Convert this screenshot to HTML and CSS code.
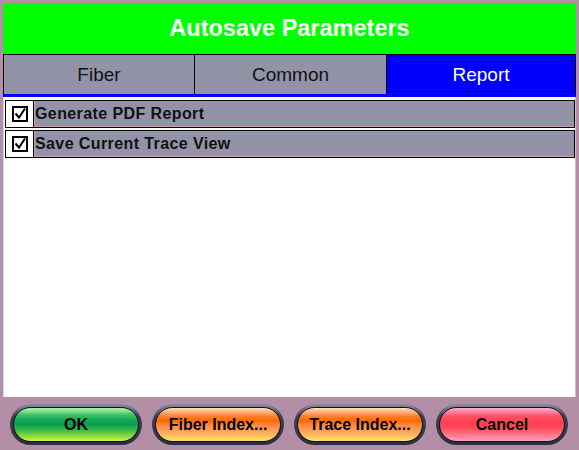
FILE: index.html
```html
<!DOCTYPE html>
<html>
<head>
<meta charset="utf-8">
<link rel="stylesheet" href="styles.css">
</head>
<body>
<div class="app">
  <div class="header">Autosave Parameters</div>
  <div class="tabs">
    <div class="tab t1">Fiber</div>
    <div class="tab t2">Common</div>
    <div class="tab active"><span class="focus">Report</span></div>
  </div>
  <div class="panel">
    <div class="row">
      <div class="cb"><svg width="16" height="16" viewBox="0 0 16 16"><rect x="1" y="1" width="14" height="14" fill="#fff" stroke="#000" stroke-width="2"/><path d="M3.5 7.5 L7 11.5 L13 2.5" fill="none" stroke="#000" stroke-width="2"/></svg></div>
      <div class="label">Generate PDF Report</div>
    </div>
    <div class="row">
      <div class="cb"><svg width="16" height="16" viewBox="0 0 16 16"><rect x="1" y="1" width="14" height="14" fill="#fff" stroke="#000" stroke-width="2"/><path d="M3.5 7.5 L7 11.5 L13 2.5" fill="none" stroke="#000" stroke-width="2"/></svg></div>
      <div class="label">Save Current Trace View</div>
    </div>
  </div>
  <div class="buttons">
    <div class="btn"><div class="face green">OK</div></div>
    <div class="btn"><div class="face orange">Fiber Index...</div></div>
    <div class="btn"><div class="face orange">Trace Index...</div></div>
    <div class="btn"><div class="face red">Cancel</div></div>
  </div>
</div>
</body>
</html>
```
FILE: styles.css
```css
html, body {
  margin: 0;
  padding: 0;
  background: #b38fa7;
  font-family: "Liberation Sans", Arial, sans-serif;
}
.app {
  width: 579px;
  height: 450px;
  padding: 3px 3px 0 3px;
  box-sizing: border-box;
  display: flex;
  flex-direction: column;
}
.header {
  height: 51px;
  background: #00ff00;
  color: #fff;
  font-weight: bold;
  font-size: 23.5px;
  display: flex;
  align-items: center;
  justify-content: center;
}
.tabs {
  display: flex;
  height: 40px;
  border: 1px solid #000;
  border-bottom: none;
  box-sizing: border-box;
}
.tab {
  background: #9393a8;
  color: #111;
  font-size: 19px;
  display: flex;
  align-items: center;
  justify-content: center;
  border-right: 1px solid #000;
}
.t1 { width: 190px; }
.t2 { width: 191px; }
.tab.active {
  flex: 1;
  border-right: none;
  background: #0000ff;
  color: #fff;
  padding: 2px;
}
.focus {
  flex: 1;
  align-self: stretch;
  display: flex;
  align-items: center;
  justify-content: center;
  border: 1px dotted #000;
}
.panel {
  height: 303px;
  border-top: 3px solid #0000ff;
  background: #fff;
  box-sizing: border-box;
  padding: 3px 1px 0 2px;
  display: flex;
  flex-direction: column;
  gap: 2px;
  box-shadow: inset 1px 0 0 #d4d4f4, inset -1px 0 0 #c4c4c4;
}
.row {
  display: flex;
  height: 28px;
}
.cb {
  width: 28px;
  box-sizing: border-box;
  border: 1px solid #000;
  border-right: none;
  background: #fff;
  display: flex;
  align-items: center;
  justify-content: center;
}
.label {
  flex: 1;
  box-sizing: border-box;
  border: 1px solid #000;
  background: #9393a8;
  box-shadow: inset 1px -1px 0 #c8a0ac;
  font-weight: bold;
  font-size: 16px;
  letter-spacing: 0.4px;
  color: #111;
  display: flex;
  align-items: center;
  padding-left: 1px;
}
.buttons {
  flex: 1;
  display: flex;
  gap: 10px;
  padding: 7px 0 0 7px;
}
.btn {
  width: 132px;
  height: 41px;
  box-sizing: border-box;
  border-radius: 21px;
  padding: 3px;
  background: linear-gradient(#8a8fa6, #3c4058 30%, #2a2d40);
}
.face {
  height: 100%;
  box-sizing: border-box;
  border: 1px solid #111;
  border-radius: 18px;
  display: flex;
  align-items: center;
  justify-content: center;
  font-weight: bold;
  font-size: 16px;
  color: #000;
}
.green {
  background: linear-gradient(#b6f0a8 0%, #7ee08a 10%, #38c060 22%, #14ac58 35%, #0c9a4a 50%, #28b450 62%, #5cc840 75%, #98e040 88%, #c8f848 100%);
}
.orange {
  background: linear-gradient(#ffe0b8 0%, #ffb080 12%, #ff8030 25%, #ff6800 38%, #ff8a40 52%, #ff9a58 65%, #ffb060 78%, #ffd060 90%, #ffe070 100%);
}
.red {
  background: linear-gradient(#ffb0c8 0%, #ff80a0 12%, #ff5068 25%, #ff4050 45%, #ff4a58 60%, #ff6878 75%, #ff88a8 90%, #ffa0c0 100%);
}
```
